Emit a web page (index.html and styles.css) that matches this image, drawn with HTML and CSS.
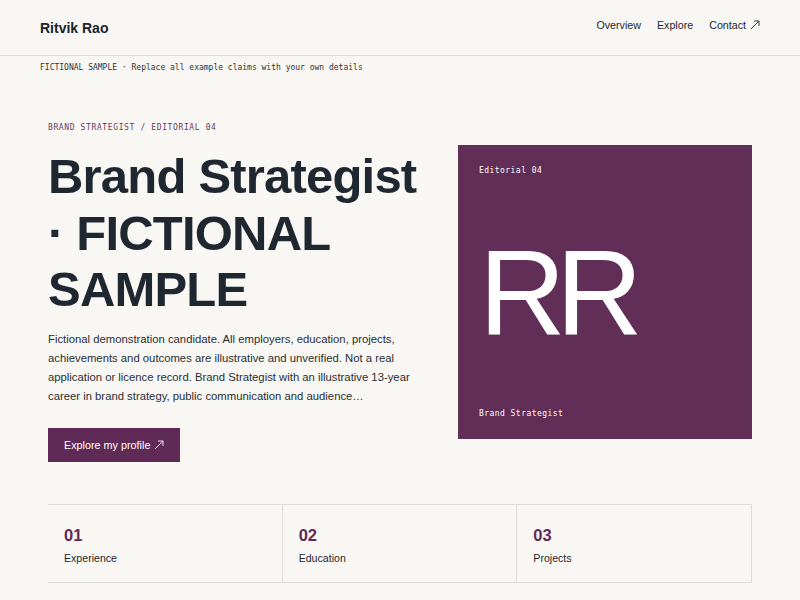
FILE: index.html
```html
<!DOCTYPE html>
<html lang="en">
<head>
<meta charset="utf-8">
<title>Ritvik Rao</title>
<link rel="stylesheet" href="styles.css">
</head>
<body>
<header class="site-header">
  <div class="brand">Ritvik Rao</div>
  <nav class="nav">
    <a href="#">Overview</a>
    <a href="#">Explore</a>
    <a href="#" class="with-arrow">Contact <svg class="arrow" viewBox="0 0 10 10" aria-hidden="true"><path d="M1 9 L9 1 M4 1 H9 V6" fill="none" stroke="currentColor" stroke-width="0.9"/></svg></a>
  </nav>
</header>
<div class="notice">FICTIONAL SAMPLE · Replace all example claims with your own details</div>
<main class="page">
  <section class="hero">
    <div class="hero-text">
      <p class="eyebrow">BRAND STRATEGIST / EDITORIAL 04</p>
      <h1 class="title">Brand Strategist · FICTIONAL SAMPLE</h1>
      <p class="lede">Fictional demonstration candidate. All employers, education, projects, achievements and outcomes are illustrative and unverified. Not a real application or licence record. Brand Strategist with an illustrative 13-year career in brand strategy, public communication and audience…</p>
      <a class="button" href="#">Explore my profile <svg class="arrow" viewBox="0 0 10 10" aria-hidden="true"><path d="M1 9 L9 1 M4 1 H9 V6" fill="none" stroke="currentColor" stroke-width="0.9"/></svg></a>
    </div>
    <div class="card">
      <span class="card-label">Editorial 04</span>
      <span class="monogram">RR</span>
      <span class="card-label">Brand Strategist</span>
    </div>
  </section>
  <section class="stats">
    <div class="stat"><span class="stat-num">01</span><span class="stat-label">Experience</span></div>
    <div class="stat"><span class="stat-num">02</span><span class="stat-label">Education</span></div>
    <div class="stat"><span class="stat-num">03</span><span class="stat-label">Projects</span></div>
  </section>
</main>
</body>
</html>
```

FILE: styles.css
```css
* { box-sizing: border-box; }
html, body { margin: 0; padding: 0; }
body {
  background: #f8f7f3;
  color: #1f2730;
  font-family: "Liberation Sans", Arial, sans-serif;
}
a { color: inherit; text-decoration: none; }

.arrow {
  display: inline-block;
  width: 10px;
  height: 10px;
  vertical-align: -1px;
  margin-left: 1px;
}

.site-header {
  display: flex;
  align-items: center;
  justify-content: space-between;
  height: 56px;
  padding: 0 40px;
  border-bottom: 1px solid #dedcd7;
}
.brand {
  font-size: 14px;
  font-weight: 700;
  color: #1c232b;
  margin-top: 1px;
}
.nav {
  display: flex;
  gap: 16px;
  font-size: 10.7px;
  color: #1f2730;
  margin-top: -6px;
}

.notice {
  padding: 6px 40px 5px;
  font-family: "DejaVu Sans Mono", monospace;
  font-size: 8px;
  line-height: 12px;
  color: #333;
}

.page {
  padding: 43px 48px 0;
}
.hero {
  display: grid;
  grid-template-columns: 1fr 294px;
  column-gap: 38px;
  align-items: center;
}
.eyebrow {
  margin: 0 0 14px;
  font-family: "DejaVu Sans Mono", monospace;
  font-size: 8px;
  line-height: 12px;
  letter-spacing: 0.62px;
  color: #6a3d62;
}
.title {
  margin: 0;
  font-size: 49px;
  line-height: 56.5px;
  font-weight: 700;
  letter-spacing: -0.8px;
  color: #1f2730;
}
.lede {
  margin: 12px 0 22px;
  font-size: 11.3px;
  line-height: 19px;
  color: #2a2f36;
}
.button {
  display: inline-block;
  background: #5f2b56;
  color: #fff;
  font-size: 10.8px;
  line-height: 34px;
  padding: 0 16px;
}

.card {
  aspect-ratio: 1 / 1;
  background: #612e57;
  color: #fff;
  display: flex;
  flex-direction: column;
  justify-content: space-between;
  padding: 21px 21px 20px;
}
.card-label {
  font-family: "DejaVu Sans Mono", monospace;
  font-size: 8px;
  line-height: 10px;
  letter-spacing: 0.45px;
}
.monogram {
  font-size: 120px;
  line-height: 120px;
  letter-spacing: -0.08em;
  margin-top: 2px;
}

.stats {
  margin-top: 42px;
  display: grid;
  grid-template-columns: repeat(3, 1fr);
  border-top: 1px solid #dedcd7;
  border-bottom: 1px solid #dedcd7;
}
.stat {
  display: flex;
  flex-direction: column;
  gap: 4px;
  padding: 19px 16px 16px;
  border-right: 1px solid #dedcd7;
}
.stat-num {
  font-size: 16.5px;
  line-height: 22px;
  font-weight: 700;
  color: #5f2b56;
}
.stat-label {
  font-size: 10.6px;
  line-height: 16px;
  color: #1f2730;
}
```
